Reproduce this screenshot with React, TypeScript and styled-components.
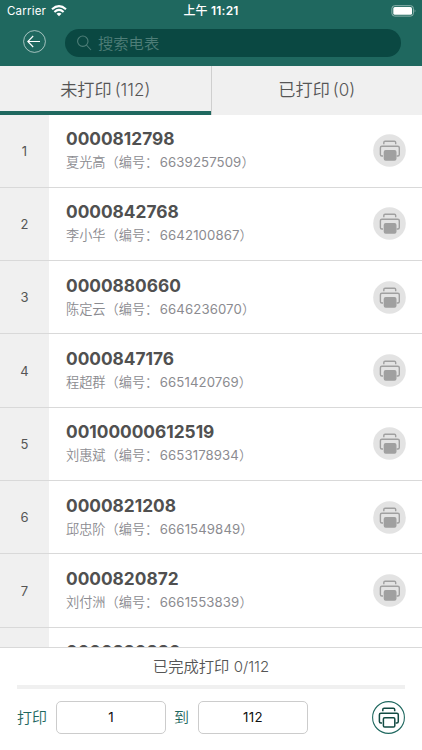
import React from 'react';
import styled, { createGlobalStyle } from 'styled-components';

const GlobalStyle = createGlobalStyle`
  * { box-sizing: border-box; }
  body { margin: 0; background: #fff; font-family: Inter, "Noto Sans CJK SC", sans-serif; }
`;

const Screen = styled.div`
  width: 422px;
  height: 750px;
  display: flex;
  flex-direction: column;
  overflow: hidden;
  background: #fff;
`;

const Header = styled.header`
  flex: none;
  height: 65.5px;
  background: #1f685f;
  color: #fff;
`;

const StatusBar = styled.div`
  height: 22px;
  display: grid;
  grid-template-columns: 1fr auto 1fr;
  align-items: center;
  padding: 0 5px 0 7px;
`;

const Carrier = styled.div`
  display: flex;
  align-items: center;
  gap: 5px;
  font-size: 11.5px;
  letter-spacing: 0.2px;
`;

const Clock = styled.div`
  padding-right: 2px;
  font-size: 12px;
  font-weight: 600;
  line-height: 22px;
  letter-spacing: 0.2px;
  span { font-weight: 500; }
`;

const BatterySlot = styled.div`
  display: flex;
  justify-content: flex-end;
`;

const NavBar = styled.div`
  display: flex;
  align-items: center;
  padding: 7px 21px 0 23px;
  gap: 19px;
`;

const BackButton = styled.button`
  width: 23px;
  height: 23px;
  padding: 0;
  border: 0;
  background: none;
  display: flex;
  margin-top: -3px;
`;

const SearchField = styled.div`
  flex: 1;
  height: 28px;
  border-radius: 14px;
  background: #0a4842;
  color: #4e7e78;
  display: flex;
  align-items: center;
  padding-left: 12px;
  gap: 6px;
  font-size: 15.3px;
  font-weight: 350;
  line-height: 29px;
`;

const Tabs = styled.div`
  flex: none;
  height: 49px;
  display: flex;
  background: #f0f0f0;
`;

const Tab = styled.div<{ $active?: boolean }>`
  flex: 1;
  display: flex;
  justify-content: center;
  gap: 3px;
  line-height: 48px;
  font-size: 17.2px;
  font-weight: 350;
  color: #555;
  border-bottom: ${p => (p.$active ? '4px solid #1f685f' : '0')};
  border-left: ${p => (p.$active ? '0' : '1px solid #cfcfcf')};
`;

const TabCount = styled.span`
  font-size: 17px;
  font-weight: 350;
`;

const List = styled.div`
  flex: 1;
  min-height: 0;
  overflow: hidden;
`;

const Row = styled.div`
  height: 73.33px;
  display: flex;
  border-bottom: 1px solid #d9d9d9;
`;

const Index = styled.div`
  flex: none;
  width: 49px;
  background: #f0f0f0;
  color: #555;
  font-size: 13px;
  display: flex;
  align-items: center;
  justify-content: center;
`;

const Info = styled.div`
  flex: 1;
  padding: 12.4px 0 0 17px;
  white-space: nowrap;
`;

const MeterNumber = styled.div`
  height: 24px;
  line-height: 24px;
  font-size: 17.3px;
  font-weight: 650;
  color: #505050;
`;

const Owner = styled.div`
  height: 23px;
  line-height: 23px;
  font-size: 13.2px;
  font-weight: 350;
  color: #8b8b90;
`;

const Serial = styled.span`
  font-weight: 400;
  letter-spacing: 0.1px;
  margin-left: 1.5px;
`;

const RowAction = styled.div`
  flex: none;
  width: 33px;
  margin-right: 16.5px;
  display: flex;
  align-items: center;
`;

const Footer = styled.footer`
  flex: none;
  height: 103px;
  border-top: 1px solid #d9d9d9;
  background: #fff;
  padding: 0 17px;
`;

const Progress = styled.div`
  height: 37px;
  line-height: 37px;
  text-align: center;
  font-size: 15.3px;
  font-weight: 350;
  color: #555;
  span { font-size: 15px; }
`;

const Track = styled.div`
  height: 4px;
  background: #f0f0f0;
`;

const Controls = styled.div`
  display: flex;
  align-items: center;
  margin-top: 12px;
  height: 33px;
`;

const Label = styled.span<{ $width: number }>`
  width: ${p => p.$width}px;
  font-size: 15px;
  font-weight: 350;
  line-height: 33px;
  color: #1f685f;
`;

const NumberBox = styled.div`
  width: 110px;
  height: 33px;
  border: 1px solid #ccc;
  border-radius: 5px;
  text-align: center;
  line-height: 31px;
  font-size: 13.3px;
  letter-spacing: 0.3px;
  color: #111;
  margin-right: 8px;
`;

const PrintSlot = styled.div`
  margin-left: auto;
  display: flex;
`;

function PrinterIcon({ primary = false }: { primary?: boolean }) {
  const stroke = primary ? '#124b43' : '#a0a0a0';
  return (
    <svg width="33" height="33" viewBox="0 0 33 33" fill="none">
      <circle cx="16.5" cy="16.5" r={primary ? 15.9 : 16.3} fill={primary ? '#fff' : '#e3e3e3'} stroke={primary ? '#1f685f' : 'none'} strokeWidth="1.1" />
      <g stroke={stroke} strokeWidth={primary ? 1.5 : 1.4} strokeLinejoin="round">
        <path d="M10.8 10.3V8.5Q10.8 7.2 12.1 7.2H21.4Q22.7 7.2 22.7 8.5V10.3" />
        <path d="M10 22H8.9Q7.4 22 7.4 20.5V13.8Q7.4 12.3 8.9 12.3H24.8Q26.3 12.3 26.3 13.8V20.5Q26.3 22 24.8 22H23.6" />
        <rect x="11.4" y="16.7" width="11.4" height="9.4" rx="1.3" fill={primary ? '#fff' : '#a0a0a0'} />
      </g>
    </svg>
  );
}

const meters = [
  ['0000812798', '夏光高', '6639257509'],
  ['0000842768', '李小华', '6642100867'],
  ['0000880660', '陈定云', '6646236070'],
  ['0000847176', '程超群', '6651420769'],
  ['00100000612519', '刘惠斌', '6653178934'],
  ['0000821208', '邱忠阶', '6661549849'],
  ['0000820872', '刘付洲', '6661553839'],
  ['0000820880', '', ''],
];

export default function App() {
  return (
    <>
      <GlobalStyle />
      <Screen>
        <Header>
          <StatusBar>
            <Carrier>
              Carrier
              <svg width="16" height="12" viewBox="0 0 16 12" fill="none" stroke="#fff" strokeWidth="2.1">
                <path d="M1 4.3Q8-2 15 4.3M3.4 7Q8 2.9 12.6 7" />
                <path d="M5.5 8.7Q8 6.7 10.5 8.7L8 11.3Z" fill="#fff" stroke="none" />
              </svg>
            </Carrier>
            <Clock><span>上午</span> 11:21</Clock>
            <BatterySlot>
              <svg width="26" height="12" viewBox="0 0 26 12" fill="none">
                <rect x=".9" y=".7" width="21.5" height="10.4" rx="2.8" stroke="#8eb3ae" />
                <rect x="2.3" y="2.1" width="18.7" height="7.6" rx="1.5" fill="#fff" />
                <path d="M23.7 4.2Q25.3 5.9 23.7 7.6Z" fill="#8eb3ae" />
              </svg>
            </BatterySlot>
          </StatusBar>
          <NavBar>
            <BackButton aria-label="返回">
              <svg width="23" height="23" viewBox="0 0 23 23" fill="none" stroke="#fff">
                <circle cx="11.5" cy="11.5" r="10.9" strokeWidth=".8" opacity=".75" />
                <path d="M17 11.5H5.2M10.2 6L4.8 11.5L10.2 17" strokeWidth="1.1" />
              </svg>
            </BackButton>
            <SearchField>
              <svg width="15" height="16" viewBox="0 0 15 16" fill="none" stroke="#4e7e78" strokeWidth="1.1">
                <circle cx="5.8" cy="6.2" r="5.2" />
                <path d="M9.4 10L14 15" />
              </svg>
              搜索电表
            </SearchField>
          </NavBar>
        </Header>
        <Tabs>
          <Tab $active>未打印<TabCount>(112)</TabCount></Tab>
          <Tab>已打印<TabCount>(0)</TabCount></Tab>
        </Tabs>
        <List>
          {meters.map(([meter, name, serial], i) => (
            <Row key={meter}>
              <Index>{name && i + 1}</Index>
              <Info>
                <MeterNumber>{meter}</MeterNumber>
                {name && <Owner>{name}（编号：<Serial>{serial}</Serial>）</Owner>}
              </Info>
              {name && <RowAction><PrinterIcon /></RowAction>}
            </Row>
          ))}
        </List>
        <Footer>
          <Progress>已完成打印 <span>0/112</span></Progress>
          <Track />
          <Controls>
            <Label $width={39}>打印</Label>
            <NumberBox>1</NumberBox>
            <Label $width={24}>到</Label>
            <NumberBox>112</NumberBox>
            <PrintSlot><PrinterIcon primary /></PrintSlot>
          </Controls>
        </Footer>
      </Screen>
    </>
  );
}
